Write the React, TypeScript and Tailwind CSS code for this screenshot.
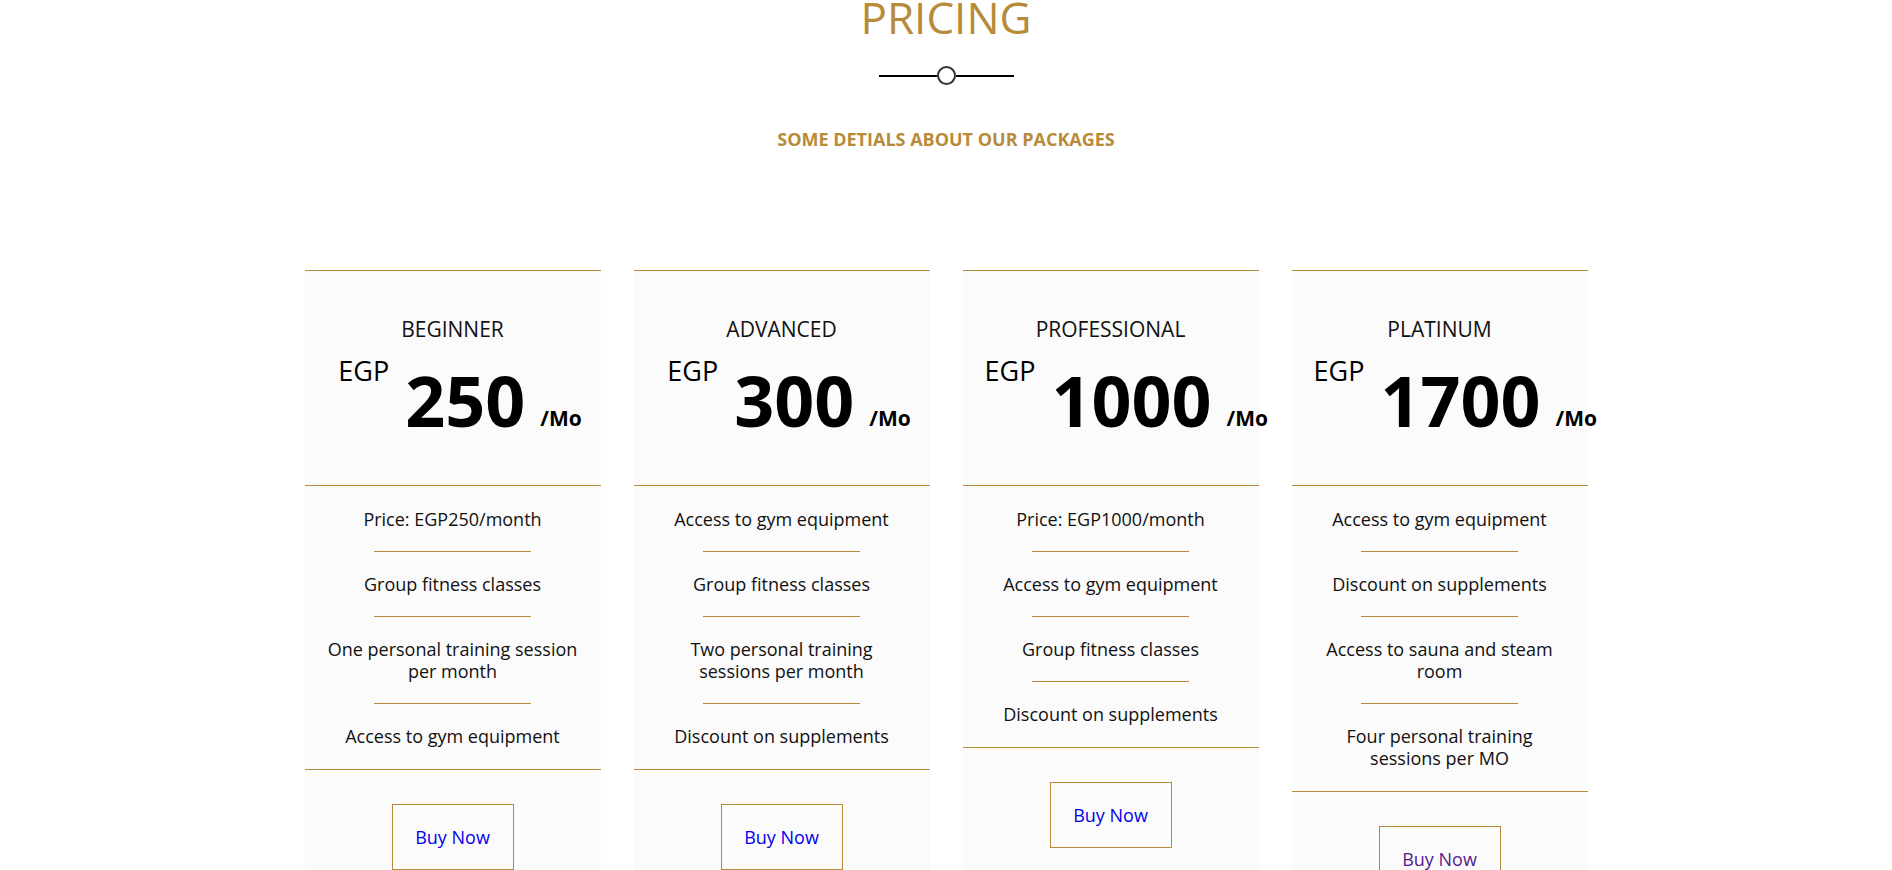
import React from "react";

type Plan = {
  name: string;
  price: string;
  features: string[];
  visited?: boolean;
};

const plans: Plan[] = [
  {
    name: "BEGINNER",
    price: "250",
    features: [
      "Price: EGP250/month",
      "Group fitness classes",
      "One personal training session per month",
      "Access to gym equipment",
    ],
  },
  {
    name: "ADVANCED",
    price: "300",
    features: [
      "Access to gym equipment",
      "Group fitness classes",
      "Two personal training sessions per month",
      "Discount on supplements",
    ],
  },
  {
    name: "PROFESSIONAL",
    price: "1000",
    features: [
      "Price: EGP1000/month",
      "Access to gym equipment",
      "Group fitness classes",
      "Discount on supplements",
    ],
  },
  {
    name: "PLATINUM",
    price: "1700",
    features: [
      "Access to gym equipment",
      "Discount on supplements",
      "Access to sauna and steam room",
      "Four personal training sessions per MO",
    ],
    visited: true,
  },
];

const PriceCard = ({ plan }: { plan: Plan }) => {
  return (
    <div className="w-[296px] bg-[#fbfbfb] border-t border-[#b78b3a] pb-8">
      {/* header */}
      <div className="h-[215px] pt-[44px] border-b border-[#b78b3a]">
        <h3 className="text-center text-[21px] leading-[28px] text-[#111]">
          {plan.name}
        </h3>
        <div className="mt-[22px] pl-[22px] text-center whitespace-nowrap text-[70px] leading-none text-black">
          <span className="relative -top-[46px] text-[27px] leading-none font-normal">
            EGP
          </span>
          <span className="ml-[16px] text-[70px] leading-none font-bold">
            {plan.price}
          </span>
          <span className="relative -top-px ml-[15px] mr-[7px] text-[21px] leading-none font-bold">
            /Mo
          </span>
        </div>
      </div>

      {/* features */}
      <ul className="pt-px pb-px border-b border-[#b78b3a]">
        {plan.features.map((f, i) => (
          <React.Fragment key={f}>
            {i > 0 && <li className="mx-auto w-[157px] h-px bg-[#b78b3a]" />}
            <li className="py-[21px] px-5 text-center text-[18px] leading-[22px] text-[#111]">
              {f}
            </li>
          </React.Fragment>
        ))}
      </ul>

      {/* action */}
      <div className="mt-[34px] flex justify-center">
        <a
          href="#"
          className={`w-[122px] h-[66px] flex items-center justify-center border border-[#b78b3a] text-[18px] ${
            plan.visited ? "text-[#551a8b]" : "text-[#0000ee]"
          }`}
        >
          Buy Now
        </a>
      </div>
    </div>
  );
};

export default function App() {
  return (
    <div
      className="w-full min-h-screen bg-white"
      style={{ fontFamily: '"Open Sans", "Liberation Sans", sans-serif' }}
    >
      <section className="pt-px flex flex-col items-center">
        <h1 className="text-[44px] leading-[32px] text-[#b78b3a] font-normal">
          PRICING
        </h1>
        <div className="mt-[33px] flex items-center">
          <span className="w-[58px] h-[2px] bg-black" />
          <span className="w-[19px] h-[19px] rounded-full border-2 border-[#333]" />
          <span className="w-[58px] h-[2px] bg-black" />
        </div>
        <p className="mt-[42px] text-[18px] leading-[24px] font-bold text-[#b78b3a]">
          SOME DETIALS ABOUT OUR PACKAGES
        </p>

        <div className="mt-[119px] grid grid-cols-[repeat(4,296px)] gap-[33px] items-start">
          {plans.map((p) => (
            <PriceCard key={p.name} plan={p} />
          ))}
        </div>
      </section>
    </div>
  );
}
